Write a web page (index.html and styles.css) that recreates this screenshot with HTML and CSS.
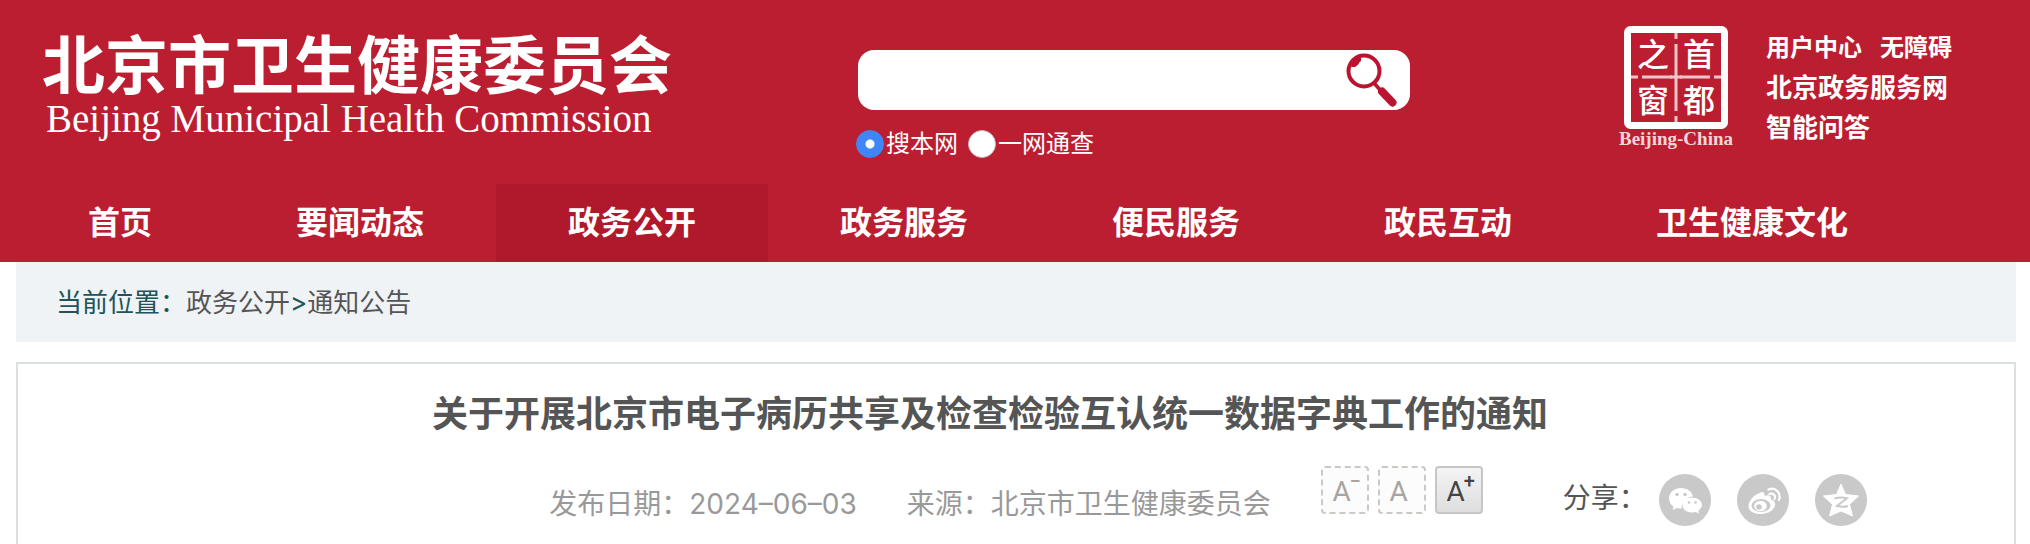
FILE: index.html
```html
<!DOCTYPE html>
<html lang="zh-CN">
<head>
<meta charset="utf-8">
<meta name="viewport" content="width=device-width, initial-scale=1">
<title>北京市卫生健康委员会</title>
<link rel="stylesheet" href="styles.css">
</head>
<body>
<header class="site-header">
  <div class="masthead">
    <a class="brand" href="#">
      <span class="brand-cn">北京市卫生健康委员会</span>
      <span class="brand-en">Beijing Municipal Health Commission</span>
    </a>
    <form class="search">
      <div class="search-box">
        <input class="search-input" type="text" aria-label="搜索">
        <button class="search-button" type="button" aria-label="搜索">
          <svg class="search-icon" viewBox="0 0 52 54" aria-hidden="true">
            <circle cx="18" cy="18" r="15.5" fill="none" stroke="#bb1431" stroke-width="4"/>
            <path d="M5 14 C6 7 10 4 15 4 L15 8 C13 9 13 12 9 14 Z" fill="#bb1431"/>
            <path d="M28 30 L35 38" stroke="#bb1431" stroke-width="3.5"/>
            <path d="M36 38.5 L46.500 49.500" stroke="#bb1431" stroke-width="8" stroke-linecap="round"/>
          </svg>
        </button>
      </div>
      <div class="scopes">
        <label class="scope"><input class="scope-radio" type="radio" name="scope" checked>搜本网</label>
        <label class="scope"><input class="scope-radio" type="radio" name="scope">一网通查</label>
      </div>
    </form>
    <div class="portal">
      <a class="capital" href="#">
        <svg class="seal" viewBox="0 0 104 103" role="img" aria-label="首都之窗">
          <rect x="3.500" y="3.500" width="97" height="96" rx="3" fill="none" stroke="#fff" stroke-width="7"/>
          <path d="M52 7V13M52 18V45M52 57V85M52 90V96M7 51H14M18 51H48M56 51H86M90 51H97" stroke="#f3c3ca" stroke-width="3"/>
          <path d="M52 45V57M46 51H58" stroke="#f3c3ca" stroke-width="3"/>
          <g class="seal-text">
            <text x="29" y="40">之</text>
            <text x="75" y="40">首</text>
            <text x="29" y="86">窗</text>
            <text x="75" y="86">都</text>
          </g>
        </svg>
        <span class="capital-name">Beijing-China</span>
      </a>
      <div class="quick">
        <div class="quick-row quick-small"><a href="#">用户中心</a><a href="#">无障碍</a></div>
        <a class="quick-row" href="#">北京政务服务网</a>
        <a class="quick-row" href="#">智能问答</a>
      </div>
    </div>
  </div>
  <nav class="nav">
    <a class="nav-item" href="#">首页</a>
    <a class="nav-item" href="#">要闻动态</a>
    <a class="nav-item nav-active" href="#">政务公开</a>
    <a class="nav-item" href="#">政务服务</a>
    <a class="nav-item" href="#">便民服务</a>
    <a class="nav-item" href="#">政民互动</a>
    <a class="nav-item" href="#">卫生健康文化</a>
  </nav>
</header>
<div class="crumbs">当前位置：<a href="#">政务公开</a>&gt;<a href="#">通知公告</a></div>
<main class="article">
  <h1 class="title">关于开展北京市电子病历共享及检查检验互认统一数据字典工作的通知</h1>
  <div class="meta">
    <div class="facts">
      <span>发布日期：2024<span class="dash">–</span>06<span class="dash">–</span>03</span>
      <span>来源：北京市卫生健康委员会</span>
    </div>
    <div class="sizes">
      <button class="size" type="button">A<span class="sign">−</span></button>
      <button class="size" type="button">A</button>
      <button class="size size-on" type="button">A<span class="sign">+</span></button>
    </div>
    <div class="share">
      <span class="share-label">分享：</span>
      <a class="share-link" href="#" aria-label="微信">
        <svg viewBox="0 0 52 52" aria-hidden="true">
          <path d="M22 14C15.500 14 10 18.500 10 24.500C10 28 12 31 14.500 32.500L13.500 36L18 34C20 34.500 21 34.500 22.500 34.500C23 27 28 23 34 22.500C33 17.500 28 14 22 14Z" fill="#fff"/>
          <path d="M33 23.500C27.500 23.500 23.500 27 23.500 31C23.500 35.500 27.500 38.500 33 38.500L36.500 38L40 39.500L39.500 36.500C41.500 35 43 33 43 31C43 27 38.500 23.500 33 23.500Z" fill="#fff"/>
          <g fill="#c9c9c9"><circle cx="18" cy="20.500" r="1.700"/><circle cx="26" cy="20.500" r="1.700"/><circle cx="30" cy="28.500" r="1.300"/><circle cx="36.500" cy="28.500" r="1.300"/></g>
        </svg>
      </a>
      <a class="share-link" href="#" aria-label="微博">
        <svg viewBox="0 0 52 52" aria-hidden="true">
          <path d="M23 19C25 17 28 18 27.500 22C31 20.500 34.500 21 34 25.500C37 26.500 38.500 28 38 31C37 36.500 31 40 23.500 40C16 40 11.500 36.500 11.500 32C11.500 27 17.500 20 23 19Z" fill="#fff"/>
          <ellipse cx="24" cy="31.500" rx="9.500" ry="6.500" fill="#c9c9c9"/>
          <ellipse cx="23.500" cy="32" rx="6.300" ry="5.200" fill="#fff"/>
          <circle cx="22" cy="33" r="2.800" fill="#c9c9c9"/>
          <path d="M31.500 15.500C38.500 12.500 44.500 19 42 26M32.500 20C36 18.500 39 21.500 37.500 25" fill="none" stroke="#fff" stroke-width="2.200" stroke-linecap="round"/>
        </svg>
      </a>
      <a class="share-link" href="#" aria-label="QQ空间">
        <svg viewBox="0 0 52 52" aria-hidden="true">
          <path d="M26 10L30.500 20.500L43.500 22L34.500 30.500L37.500 42L26 37L14.500 42L17.500 30.500L8.500 22L21.500 20.500Z" fill="#fff" stroke="#fff" stroke-linejoin="round"/>
          <path d="M19.500 24.500C24 23.300 28 23.300 32 24.300L22 32C26 33 30 33 33 32" fill="none" stroke="#c9c9c9" stroke-width="2"/>
        </svg>
      </a>
    </div>
  </div>
</main>
</body>
</html>
```

FILE: styles.css
```css
* {
  box-sizing: border-box;
}

body {
  margin: 0;
  min-height: 100vh;
  display: flex;
  flex-direction: column;
  background: #fff;
  color: #555;
  font-family: Inter, "Noto Sans CJK SC", sans-serif;
}

a {
  color: inherit;
  text-decoration: none;
}

.site-header {
  background: #bb1e30;
  color: #fff;
}

.masthead {
  display: grid;
  grid-template-columns: 856fr 554fr 620fr;
  min-height: 184px;
}

.brand {
  display: flex;
  flex-direction: column;
  padding: 30px 0 0 42px;
  white-space: nowrap;
}

.brand-cn {
  font-size: 63px;
  font-weight: 700;
  line-height: 70px;
}

.brand-en {
  padding-left: 4px;
  font-family: "Liberation Serif", serif;
  font-size: 39px;
  line-height: 38px;
}

.search {
  padding-top: 50px;
}

.search-box {
  display: flex;
  height: 60px;
  margin-left: 2px;
  background: #fff;
  border-radius: 16px;
}

.search-input {
  flex: 1;
  min-width: 0;
  padding: 0 16px;
  border: 0;
  background: transparent;
  font: inherit;
  font-size: 24px;
  outline: 0;
}

.search-button {
  padding: 3px 12px 3px 0;
  border: 0;
  background: transparent;
}

.search-icon {
  display: block;
  width: 52px;
  height: 54px;
}

.scopes {
  display: flex;
  gap: 10px;
  margin-top: 16px;
  font-size: 24px;
  line-height: 36px;
}

.scope {
  display: flex;
  align-items: center;
  gap: 2px;
}

.scope-radio {
  appearance: none;
  width: 28px;
  height: 28px;
  margin: 0;
  border: 1px solid #c9b9bb;
  border-radius: 50%;
  background: #fff;
}

.scope-radio:checked {
  border-color: #3f87f8;
  background: radial-gradient(circle, #fff 0 4px, #3f87f8 5px);
}

.portal {
  display: flex;
  align-items: flex-start;
  gap: 32px;
  padding: 26px 0 0 208px;
}

.capital {
  display: flex;
  flex-direction: column;
  align-items: center;
  width: 116px;
}

.seal {
  width: 104px;
  height: 103px;
}

.seal-text {
  fill: #fff;
  font-size: 32px;
  font-weight: 500;
  text-anchor: middle;
}

.capital-name {
  color: #f6d5d9;
  font-family: "Liberation Serif", serif;
  font-size: 19px;
  font-weight: 700;
  line-height: 20px;
}

.quick {
  display: flex;
  flex-direction: column;
  padding-top: 2px;
  font-size: 26px;
  font-weight: 700;
  line-height: 40px;
  white-space: nowrap;
}

.quick-small {
  display: flex;
  gap: 18px;
  font-size: 24px;
}

.nav {
  display: flex;
  padding-left: 16px;
}

.nav-item {
  padding: 0 72px;
  font-size: 32px;
  font-weight: 700;
  line-height: 78px;
  white-space: nowrap;
}

.nav-active {
  background: #b0182b;
}

.crumbs {
  margin: 0 14px 0 16px;
  padding: 2px 0 0 40px;
  background: #eff3f6;
  color: #205459;
  font-size: 26px;
  line-height: 78px;
}

.crumbs a {
  color: #555;
}

.article {
  flex: 1;
  margin: 20px 14px 0 16px;
  padding: 26px 52px 0 0;
  border: 2px solid #dadfe2;
  border-bottom: 0;
}

.title {
  margin: 0;
  font-size: 36px;
  font-weight: 700;
  line-height: 48px;
  text-align: center;
}

.meta {
  display: flex;
  justify-content: center;
  align-items: flex-start;
  padding: 28px 0 16px 436px;
}

.facts {
  display: flex;
  gap: 50px;
  padding-top: 18px;
  color: #999;
  font-size: 28px;
  line-height: 40px;
  white-space: nowrap;
}

.sizes {
  display: flex;
  gap: 9px;
  margin-left: 50px;
}

.size {
  position: relative;
  width: 48px;
  height: 48px;
  padding: 4px 6px 0 0;
  border: 2px dashed #ccc9c5;
  border-radius: 4px;
  background: #fcfcfc;
  color: #a8a49f;
  font-family: Roboto, sans-serif;
  font-size: 28px;
  line-height: 40px;
}

.size-on {
  border: 2px solid #c6c6c6;
  background: linear-gradient(#f4f4f4, #dedede);
  color: #444;
}

.sign {
  position: absolute;
  top: 2px;
  right: 6px;
  font-size: 20px;
  font-weight: 500;
  line-height: 22px;
}

.share {
  display: flex;
  gap: 26px;
  margin-left: 80px;
  padding-top: 8px;
}

.share-label {
  width: 70px;
  font-size: 28px;
  line-height: 48px;
  white-space: nowrap;
}

.share-link {
  width: 52px;
  height: 52px;
  border-radius: 50%;
  background: #c9c9c9;
}
```
